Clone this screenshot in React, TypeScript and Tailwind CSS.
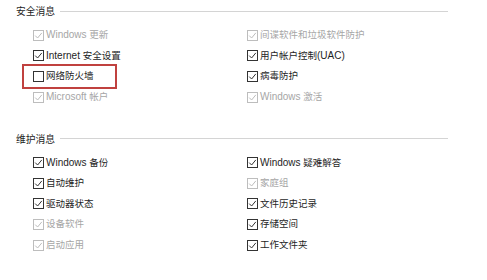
import React from "react";

type Item = { label: string; checked: boolean; disabled?: boolean };

const security: Item[][] = [
  [
    { label: "Windows 更新", checked: true, disabled: true },
    { label: "间谍软件和垃圾软件防护", checked: true, disabled: true },
  ],
  [
    { label: "Internet 安全设置", checked: true },
    { label: "用户帐户控制(UAC)", checked: true },
  ],
  [
    { label: "网络防火墙", checked: false },
    { label: "病毒防护", checked: true },
  ],
  [
    { label: "Microsoft 帐户", checked: true, disabled: true },
    { label: "Windows 激活", checked: true, disabled: true },
  ],
];

const maintenance: Item[][] = [
  [
    { label: "Windows 备份", checked: true },
    { label: "Windows 疑难解答", checked: true },
  ],
  [
    { label: "自动维护", checked: true },
    { label: "家庭组", checked: true, disabled: true },
  ],
  [
    { label: "驱动器状态", checked: true },
    { label: "文件历史记录", checked: true },
  ],
  [
    { label: "设备软件", checked: true, disabled: true },
    { label: "存储空间", checked: true },
  ],
  [
    { label: "启动应用", checked: true, disabled: true },
    { label: "工作文件夹", checked: true },
  ],
];

// CJK runs are set a little smaller than latin so widths track the original
function Label({ text }: { text: string }) {
  const parts = text.split(/([\u3400-\u9fff]+)/).filter(Boolean);
  return (
    <>
      {parts.map((p, i) =>
        /[\u3400-\u9fff]/.test(p) ? (
          <span key={i} className="text-[9.5px]">
            {p}
          </span>
        ) : (
          <span key={i}>{p}</span>
        )
      )}
    </>
  );
}

function Check({ item }: { item: Item }) {
  const color = item.disabled ? "#bdbdbd" : "#333333";
  return (
    <div className="flex items-center h-[20.6px]">
      <svg width="11" height="11" viewBox="0 0 11 11" className="shrink-0">
        <rect x="0.5" y="0.5" width="10" height="10" fill="white" stroke={color} strokeWidth="1" />
        {item.checked && (
          <path d="M2.2 5.6 L4.6 8 L8.8 2.9" fill="none" stroke={color} strokeWidth="1" />
        )}
      </svg>
      <span
        className={`ml-[2px] text-[10px] leading-none whitespace-nowrap ${
          item.disabled ? "text-[#a6a6a6]" : "text-[#1e1e1e]"
        }`}
      >
        <Label text={item.label} />
      </span>
    </div>
  );
}

function Section({ title, rows, marked }: { title: string; rows: Item[][]; marked?: number }) {
  return (
    <div className="flex flex-col">
      <div className="flex items-center h-[24px] pl-4 pr-[39px]">
        <span className="text-[9.75px] text-[#1e1e1e] leading-none whitespace-nowrap">{title}</span>
        <div className="flex-1 h-px bg-[#d4d4d4] ml-[5px] mt-[-1px]" />
      </div>
      <div className="flex flex-col mt-px">
        {rows.map((pair, i) => (
          <div key={i} className="flex pl-[33px]">
            <div className="relative w-[214px]">
              <Check item={pair[0]} />
              {marked === i && (
                <div className="absolute left-[-11px] top-[-2px] w-[95px] h-[25px] border-2 border-[#c0413f]" />
              )}
            </div>
            <Check item={pair[1]} />
          </div>
        ))}
      </div>
    </div>
  );
}

export default function App() {
  return (
    <div
      className="w-[487px] h-[280px] bg-white overflow-hidden"
      style={{ fontFamily: '"Liberation Sans", "Noto Sans CJK SC", sans-serif' }}
    >
      <Section title="安全消息" rows={security} marked={2} />
      <div className="h-[20px]" />
      <Section title="维护消息" rows={maintenance} />
    </div>
  );
}
